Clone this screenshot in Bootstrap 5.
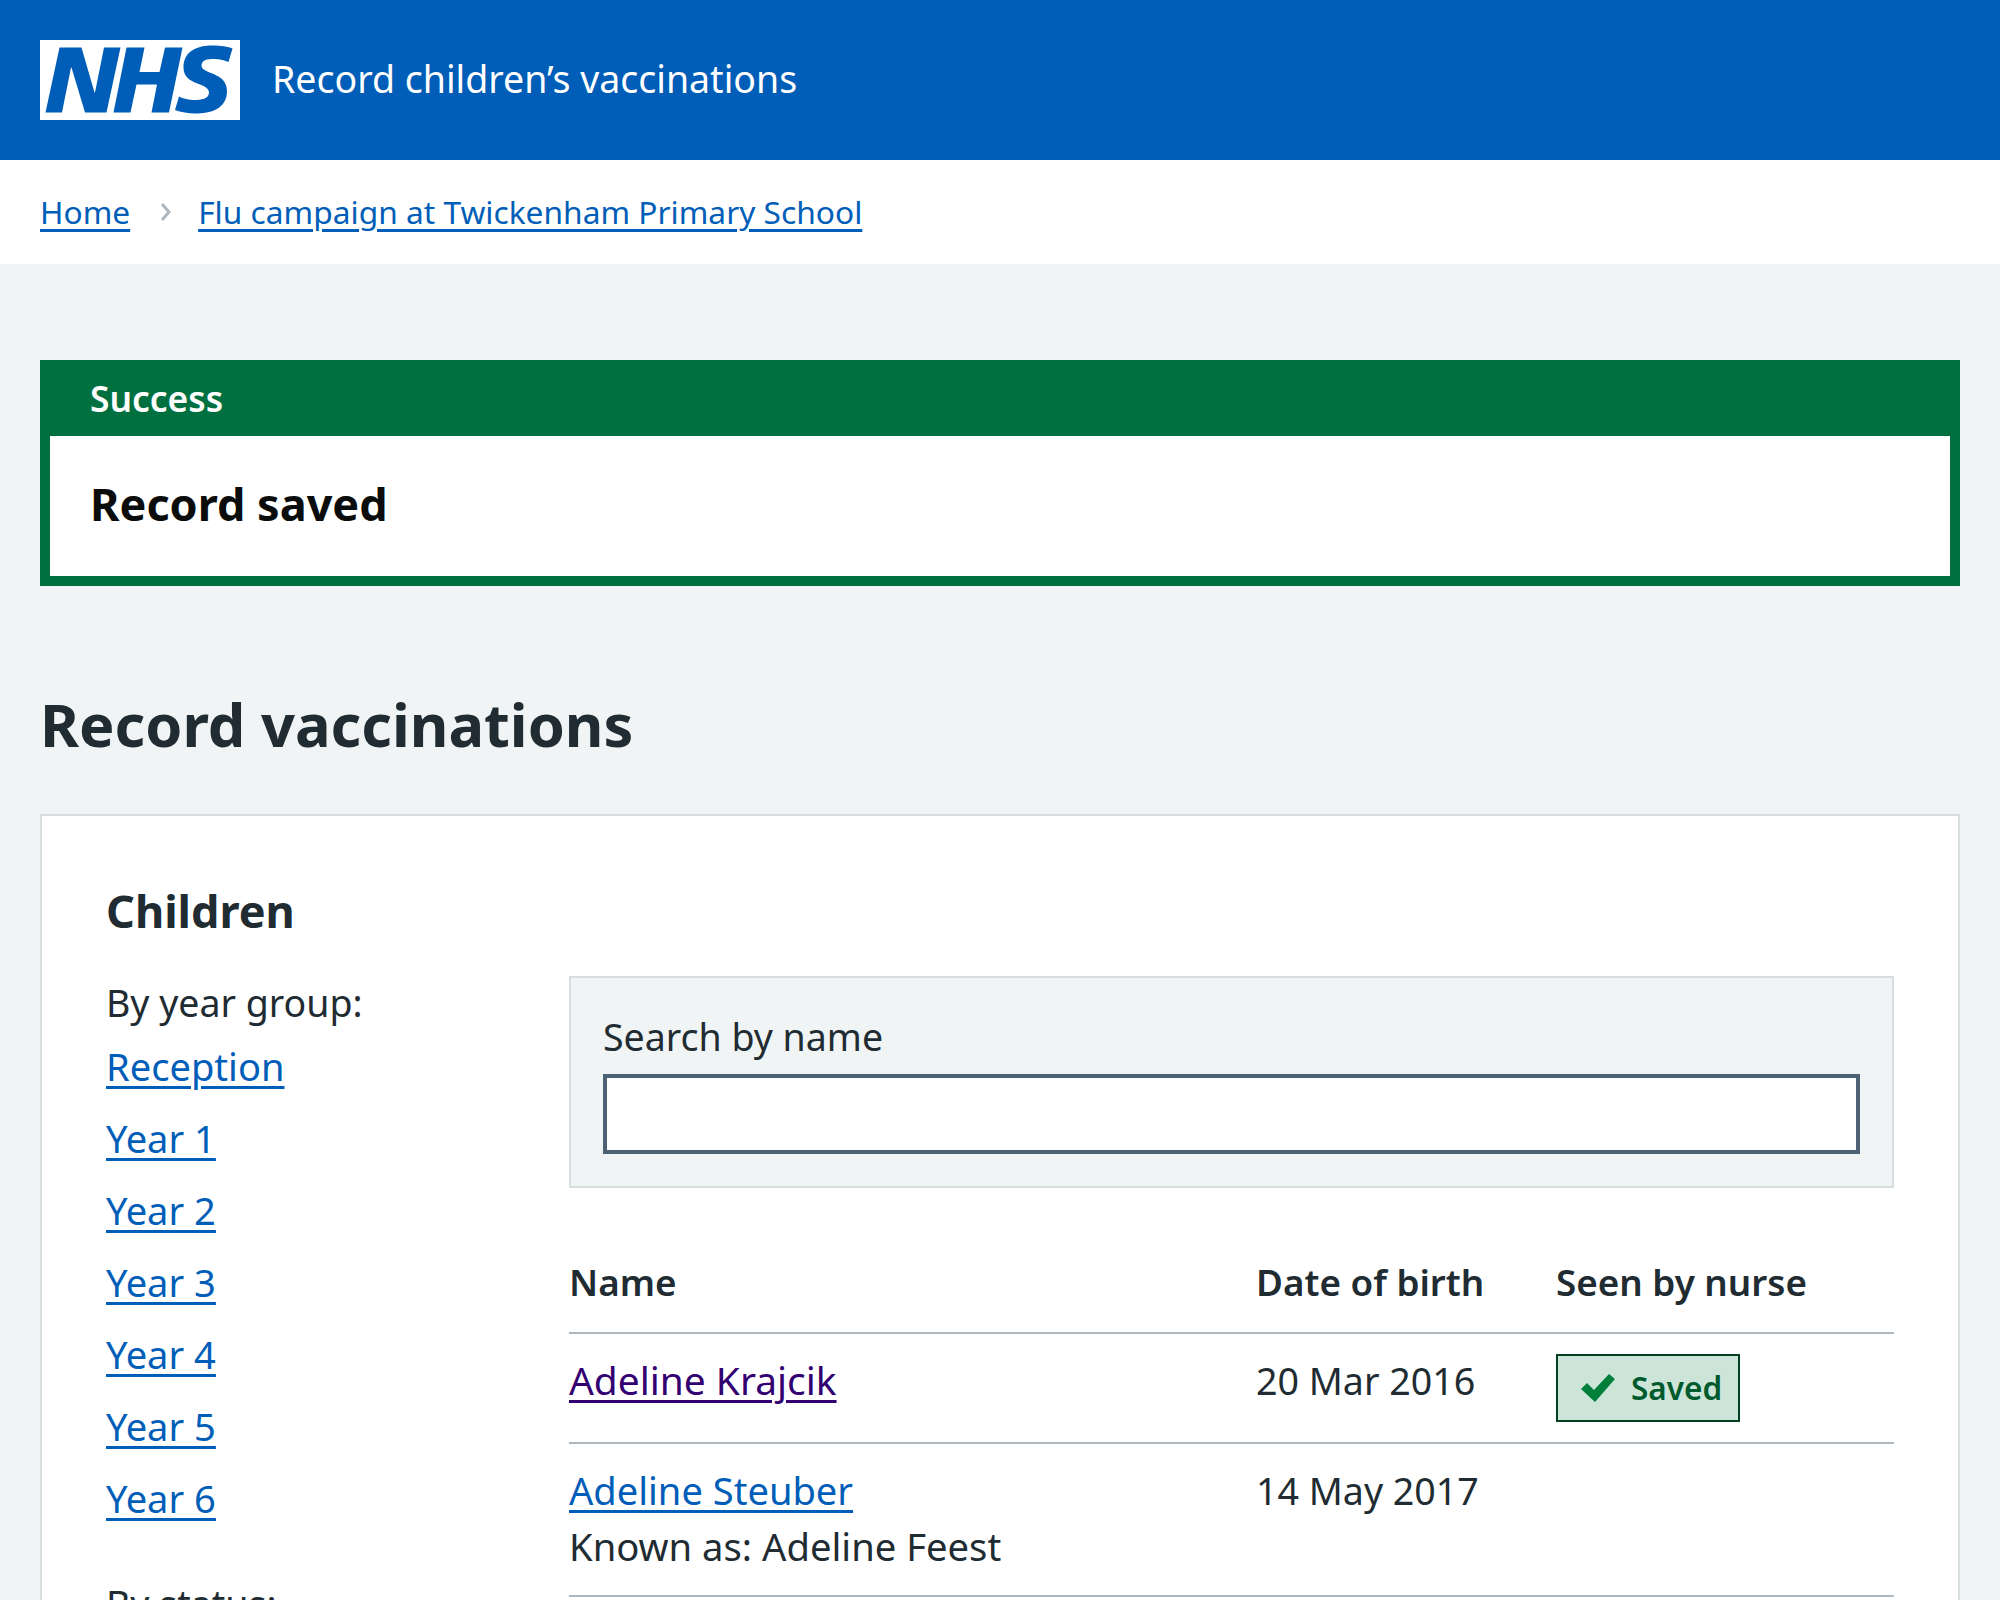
<!DOCTYPE html>
<html lang="en">
<head>
  <meta charset="UTF-8">
  <title>Record children's vaccinations</title>
  <link href="https://cdn.jsdelivr.net/npm/bootstrap@5.3.0/dist/css/bootstrap.min.css" rel="stylesheet">
  <style>
    html, body { height: 100%; overflow: hidden; }
    body { font-family: "Noto Sans", "Open Sans", sans-serif; font-size: 37.5px; line-height: 56px; color: #212b32; background: #f0f4f5; }
    a { color: #005eb8; font-size: 38.1px; text-decoration-thickness: 3px; text-underline-offset: 5px; }
    a.seen { color: #330072; font-size: 38.9px; }

    .top-bar { height: 160px; background: #005eb8; padding: 0 40px; }
    .top-bar .logo-box { width: 200px; height: 80px; display: block; }
    .service-name { color: #fff; font-size: 37.5px; margin: 0 0 2px 32px; }

    .crumbs { height: 104px; background: #fff; padding: 0 40px; }
    .crumbs a { font-size: 31.7px; }
    .crumbs .chev { margin: 0 26px 0 30px; }

    .page-main { padding: 96px 40px 0; }

    .saved-alert { border: 10px solid #007040; border-top-width: 0; background: #fff; height: 226px; }
    .saved-alert .alert-top { height: 76px; margin: 0 -10px; padding: 0 50px; background: #007040; color: #fff; font-size: 35.4px; font-weight: 600; line-height: 76px; }
    .saved-alert .alert-body { padding: 0 40px; font-size: 45px; font-weight: 700; color: #0b0c0c; line-height: 136px; }

    .page-title { font-size: 59.5px; font-weight: 700; line-height: 80px; margin: 98px 0 50px; }

    .panel { border: 2px solid #d8dde0; background: #fff; padding: 67px 64px 48px; }
    .panel h2 { font-size: 45px; font-weight: 700; line-height: 56px; margin: 0 0 34px; }
    .panel .row { --bs-gutter-x: 64px; }
    .year-links { list-style: none; padding: 0; margin: 0; }
    .year-links li { height: 72px; line-height: 66px; }
    .group-label { line-height: 60px; margin: 0; }
    .status-label { margin-top: 37px; }

    .search-box { background: #f0f4f5; border: 2px solid #d8dde0; height: 212px; padding: 31px 32px 32px; margin-top: 3px; }
    .search-box label { display: block; line-height: 56px; margin-bottom: 9px; }
    .search-box .form-control { height: 80px; border: 4px solid #4c6272; border-radius: 0; background: #fff; box-shadow: none; }

    .kids-table { margin: 66px 0 0; table-layout: fixed; --bs-table-border-color: #aeb7bd; color: #212b32; }
    .kids-table th, .kids-table td { padding: 0; border-bottom: 2px solid #aeb7bd; vertical-align: top; }
    .kids-table th { font-size: 36.8px; font-weight: 600; height: 79px; line-height: 56px; }
    .kids-table td { font-size: 37.6px; padding-top: 19px; padding-bottom: 20px; line-height: 56px; }
    .kids-table td.name-cell { font-size: 38.2px; padding-top: 18px; padding-bottom: 21px; }
    .kids-table .first-col { width: 687px; }
    .kids-table .second-col { width: 300px; }

    .saved-tag { display: inline-flex; align-items: center; gap: 15px; height: 68px; padding: 0 16px 0 22px; margin-top: 1px; border: 2px solid #00401e; background: #cce5d8; color: #005a2d; font-size: 31.5px; font-weight: 600; vertical-align: top; }
  </style>
</head>
<body>
  <header class="top-bar d-flex align-items-center">
    <a href="#" class="logo-box" aria-label="NHS">
      <svg width="200" height="80" viewBox="0 0 40 16" xmlns="http://www.w3.org/2000/svg">
        <path fill="#fff" d="M0 0h40v16H0z"></path>
        <path fill="#005eb8" d="M3.9 1.5h4.4l2.6 9h.1l1.8-9h3.3l-2.8 13H9l-2.7-9h-.1l-1.8 9H1.1M17.3 1.5h3.6l-1 4.9h4L25 1.5h3.5l-2.7 13h-3.5l1.1-5.6h-4.1l-1.2 5.6h-3.4M37.7 4.4c-.7-.3-1.6-.6-2.9-.6-1.4 0-2.5.2-2.5 1.3 0 1.8 5.1 1.2 5.1 5.1 0 3.6-3.3 4.5-6.4 4.5-1.3 0-2.9-.3-4-.7l.8-2.7c.7.4 2.1.7 3.2.7s2.8-.2 2.8-1.5c0-2.1-5.1-1.3-5.1-5 0-3.4 2.9-4.4 5.8-4.4 1.6 0 3.1.2 4 .6"></path>
      </svg>
    </a>
    <span class="service-name">Record children’s vaccinations</span>
  </header>

  <nav class="crumbs d-flex align-items-center">
    <a href="#">Home</a>
    <svg class="chev" width="12" height="20" viewBox="0 0 12 20" xmlns="http://www.w3.org/2000/svg"><path d="M2 2l7 8-7 8" fill="none" stroke="#aeb7bd" stroke-width="3"></path></svg>
    <a href="#">Flu campaign at Twickenham Primary School</a>
  </nav>

  <main class="page-main">
    <div class="saved-alert">
      <div class="alert-top">Success</div>
      <div class="alert-body">Record saved</div>
    </div>

    <h1 class="page-title">Record vaccinations</h1>

    <section class="panel">
      <h2>Children</h2>
      <div class="row">
        <div class="col-3">
          <p class="group-label">By year group:</p>
          <ul class="year-links">
            <li><a href="#">Reception</a></li>
            <li><a href="#">Year 1</a></li>
            <li><a href="#">Year 2</a></li>
            <li><a href="#">Year 3</a></li>
            <li><a href="#">Year 4</a></li>
            <li><a href="#">Year 5</a></li>
            <li><a href="#">Year 6</a></li>
          </ul>
          <p class="group-label status-label">By status:</p>
        </div>
        <div class="col-9">
          <div class="search-box">
            <label for="nameSearch">Search by name</label>
            <input id="nameSearch" type="text" class="form-control">
          </div>
          <table class="table kids-table">
            <thead>
              <tr>
                <th class="first-col">Name</th>
                <th class="second-col">Date of birth</th>
                <th>Seen by nurse</th>
              </tr>
            </thead>
            <tbody>
              <tr>
                <td class="name-cell"><a class="seen" href="#">Adeline Krajcik</a></td>
                <td>20 Mar 2016</td>
                <td>
                  <span class="saved-tag">
                    <svg width="36" height="30" viewBox="0 0 36 30" xmlns="http://www.w3.org/2000/svg"><path d="M1 16l6-6 7 7L29 1l6 5-20 23z" fill="#007f3b"></path></svg>
                    Saved
                  </span>
                </td>
              </tr>
              <tr>
                <td class="name-cell"><a href="#">Adeline Steuber</a><br>Known as: Adeline Feest</td>
                <td>14 May 2017</td>
                <td></td>
              </tr>
            </tbody>
          </table>
        </div>
      </div>
    </section>
  </main>
</body>
</html>
